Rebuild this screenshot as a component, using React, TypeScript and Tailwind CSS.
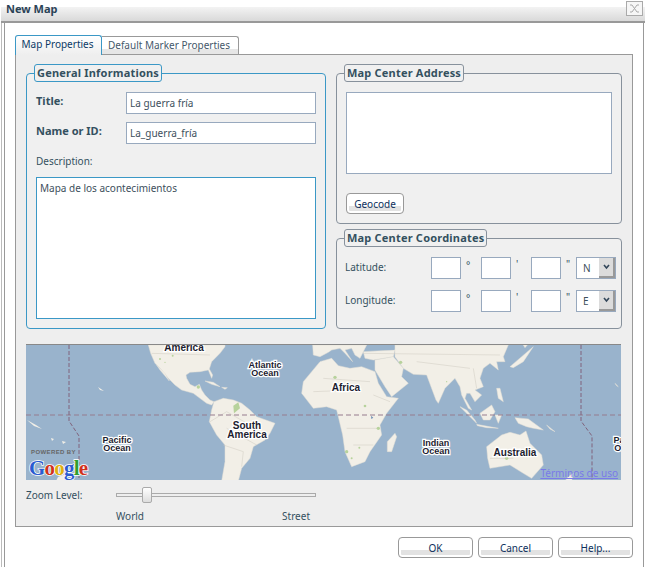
const font = "[font-family:'Noto_Sans',sans-serif]";

function Legend({ title, active }: { title: string; active?: boolean }) {
  return (
    <legend
      className={`-ml-[2px] h-[18px] rounded-[3px] border bg-[#f0f0f0] px-[2px] text-[11px] leading-[15px] font-bold tracking-[0.2px] text-[#34505f] ${
        active ? "border-[#3b98c6]" : "border-[#87919c]"
      }`}
    >
      {title}
    </legend>
  );
}

function Field({ value, className }: { value?: string; className: string }) {
  return (
    <input
      readOnly
      value={value ?? ""}
      className={`h-[22px] border border-[#98a9be] bg-white px-[3px] text-[10px] text-[#3d4f5c] outline-none ${className}`}
    />
  );
}

function Coordinates({ label, dir }: { label: string; dir: string }) {
  return (
    <div className="flex h-[22px] items-center">
      <span className="-ml-px w-[86px] pb-[2px] text-[10px] text-[#34505f]">{label}</span>
      <Field className="w-[30px]" />
      <span className="w-[20px] self-start pl-[5px] text-[10px] leading-[16px] text-[#34505f]">°</span>
      <Field className="w-[30px]" />
      <span className="w-[20px] self-start pl-[5px] text-[10px] leading-[14px] text-[#34505f]">'</span>
      <Field className="w-[30px]" />
      <span className="w-[15px] self-start pl-[5px] text-[10px] leading-[14px] text-[#34505f]">"</span>
      <div className="flex h-[22px] w-[40px] items-center border border-[#98a9be] bg-white pl-[6px] text-[10px] text-[#3d4f5c]">
        <span className="flex-1">{dir}</span>
        <span className="flex h-[20px] w-[16px] items-center justify-center border-r-2 border-b-2 border-[#999] bg-[#dcdcdc]">
          <svg width="7" height="6" viewBox="0 0 7 6">
            <path d="M1 1l2.5 3L6 1" fill="none" stroke="#33475a" strokeWidth="1.6" />
          </svg>
        </span>
      </div>
    </div>
  );
}

function Btn({ label, className }: { label: string; className: string }) {
  return (
    <button
      className={`rounded-[4px] border border-[#999] bg-[linear-gradient(#fff_62%,#e2e2e2_64%)] text-[10px] leading-none text-[#0c2f5c] shadow-[inset_0_0_0_2px_#fff] ${className}`}
    >
      {label}
    </button>
  );
}

function WorldMap() {
  const label = "font-bold fill-[#1c1c30] stroke-white [stroke-width:2.5px] [paint-order:stroke] [font-family:'Liberation_Sans',sans-serif]";
  return (
    <svg width="595" height="136" viewBox="0 0 595 136" className="block">
      <rect width="595" height="136" fill="#99b3cc" />
      {/* americas, drawn at 3x */}
      <g transform="translate(84 0) scale(0.3333)">
        <g fill="#f2efe7" stroke="#e2dfd4" strokeWidth="1.5">
          <path d="M115 0L122 25L135 55L150 70L175 100L195 120L215 135L250 145L270 160L290 175L305 180L312 170L300 165L285 150L275 135L268 118L255 125L240 118L230 100L228 90L240 82L270 80L295 75L305 100L308 90L298 72L305 50L330 25L345 5L345 0Z" />
          <path d="M285 108L310 112L330 125L305 118Z" />
          <path d="M335 127L352 128L345 133Z" />
          <path d="M140 60L150 75L178 108L165 85Z" />
          <path d="M312 170L340 160L370 165L395 175L420 195L440 215L495 235L480 265L465 285L430 305L420 340L395 370L385 408L335 408L345 350L345 300L320 270L298 230L305 195Z" />
        </g>
        <path d="M125 25L300 30M300 230L350 200L420 240M340 300L400 320M400 320L395 365M350 250L440 300" fill="none" stroke="#cfcbc0" strokeWidth="1.5" />
        <g fill="#b7d29c">
          <path d="M370 182L385 172L390 190L372 205Z" />
          <circle cx="265" cy="126" r="5" /><circle cx="188" cy="32" r="3" /><circle cx="150" cy="42" r="3" /><circle cx="165" cy="52" r="2" />
        </g>
      </g>

      {/* africa, eurasia, pacific, drawn at 3x */}
      <g transform="translate(244 0) scale(0.3333)">
        <g fill="#f2efe7" stroke="#e2dfd4" strokeWidth="1.5">
          <path d="M125 80L150 50L185 40L205 62L240 70L275 65L315 80L325 115L350 155L385 160L350 205L330 240L335 270L300 320L285 350L245 365L225 320L218 270L205 215L200 195L170 185L130 190L95 145L100 110Z" />
          <path d="M375 265L380 275L365 320L352 320L352 290Z" />
          <path d="M128 0L290 0L280 20L270 40L255 30L245 10L225 15L248 50L225 25L210 10L185 15L175 22L150 35L130 30Z" />
          <path d="M280 20L375 15L370 35L310 45L285 40Z" />
          <path d="M375 0L715 0L700 35L705 50L680 50L685 75L660 55L640 70L630 100L640 125L615 135L635 150L615 170L600 145L590 145L585 160L605 195L595 190L575 150L570 125L555 100L525 130L505 175L498 165L470 90L430 88L400 70L375 35Z" />
          <path d="M315 45L370 35L400 70L395 95L415 115L365 155L345 125L315 75Z" />
          <path d="M300 0L370 0L372 14L300 14Z" fill="#99b3cc" stroke="none" />
          <path d="M790 5L755 35L720 65L730 68L760 50L780 20Z" />
          <path d="M760 0L772 0L765 8Z" />
          <path d="M570 185L590 205L620 235L615 225L590 195Z" />
          <path d="M620 238L685 250L650 248L622 242Z" />
          <path d="M630 205L665 180L675 200L660 225L640 225Z" />
          <path d="M675 210L695 210L685 235Z" />
          <path d="M680 130L690 130L700 170L685 160Z" />
          <path d="M735 218L775 222L820 255L790 250L770 245L745 235Z" />
          <path d="M830 240L855 260L840 252Z" />
          <path d="M650 305L695 270L720 262L750 270L768 258L780 295L815 330L820 360L785 400L760 385L720 360L660 370L653 340Z" />
          <path d="M895 395L910 385L905 408L885 408Z" />
          <path d="M1035 115L1045 125L1040 122Z" />
        </g>
        <path d="M130 140L260 135M160 100L300 110M310 150L360 170M230 250L330 250M250 300L310 300M280 25L690 30M440 50L600 70M610 70L620 130M660 340L730 340" fill="none" stroke="#cfcbc0" strokeWidth="1.5" />
        <g fill="#b7d29c">
          <circle cx="195" cy="97" r="5" /><circle cx="285" cy="183" r="4" /><circle cx="325" cy="250" r="5" />
          <circle cx="230" cy="320" r="5" /><circle cx="268" cy="308" r="3" /><circle cx="245" cy="340" r="3" />
          <circle cx="392" cy="52" r="5" /><circle cx="710" cy="340" r="5" /><circle cx="530" cy="110" r="2" />
        </g>
        <path d="M303 212L310 218L304 222Z" fill="#6f8fb5" />
      </g>

      {/* pacific islands */}
      <g fill="#f2efe7">
        <path d="M1 75L10 80L16 84L8 81Z" /><path d="M25 93L28 94L26 96Z" /><path d="M36 96L40 97L37 99Z" />
        <path d="M72 42L78 46L74 45Z" /><path d="M32 132L42 128L38 136L30 136Z" />
      </g>

      {/* equator and date line */}
      <path d="M0 70H595" stroke="#967c8e" strokeWidth="1.2" strokeDasharray="5 3" fill="none" />
      <path d="M43 0V76L53 91V136M555 0V76L566 91V136" stroke="#80637c" strokeWidth="1" strokeDasharray="4 2" fill="none" />
      <g fontSize="9" textAnchor="middle" className={label}>
        <text x="158" y="6" fontSize="10">America</text>
        <text x="239" y="23">Atlantic</text>
        <text x="239" y="31">Ocean</text>
        <text x="320" y="46" fontSize="10">Africa</text>
        <text x="221" y="84" fontSize="10">South</text>
        <text x="221" y="93" fontSize="10">America</text>
        <text x="91" y="98">Pacific</text>
        <text x="91" y="106">Ocean</text>
        <text x="410" y="101">Indian</text>
        <text x="410" y="109">Ocean</text>
        <text x="489" y="111" fontSize="10">Australia</text>
        <text x="602" y="98">Pacific</text>
        <text x="602" y="106">Ocean</text>
      </g>
      <text x="5" y="109" fontSize="6" fontWeight="bold" fill="#666" className="[font-family:'Liberation_Sans',sans-serif] tracking-[0.4px]">POWERED BY</text>
      <text x="3" y="130" fontSize="21" fontWeight="bold" stroke="#fff" strokeWidth="1.5" className="[font-family:'Liberation_Serif',serif] [paint-order:stroke] tracking-[-0.8px]">
        <tspan fill="#2a5bd0">G</tspan>
        <tspan fill="#d0321e">o</tspan>
        <tspan fill="#e0b010">o</tspan>
        <tspan fill="#2a5bd0">g</tspan>
        <tspan fill="#2f9e2f">l</tspan>
        <tspan fill="#d0321e">e</tspan>
      </text>
    </svg>
  );
}

export default function App() {
  return (
    <div className={`relative h-[567px] w-[645px] overflow-hidden bg-white pt-[7px] ${font}`}>
      {/* title bar */}
      <div className="ml-[1px] h-[16px] w-[644px] border-b-2 border-[#999] bg-[linear-gradient(#f3f3f3,#d9d9d9)] pl-[5px] text-[11px] leading-[4px] font-bold text-[#2b4357]">
        New Map
      </div>
      <div className="absolute top-[1px] left-[626px] flex h-[15px] w-[17px] items-center justify-center border border-[#aaa] bg-[#f6f6f6]">
        <svg width="11" height="9" viewBox="0 0 11 9">
          <path d="M1 1h2l5 7h2M10 1H8L3 8H1" fill="none" stroke="#a9a9a9" />
        </svg>
      </div>

      <div className="ml-[1px] h-[544px] w-[643px] border-x border-l-[#bbb] border-r-[#999] pt-[13px] pr-[10px] pl-[13px] shadow-[inset_2px_0_0_#fff,inset_3px_0_0_#999]">
        {/* tabs */}
        <div className="relative z-10 flex h-[18px] items-end text-[10px]">
          <div className="-mb-px h-[20px] w-[87px] rounded-t-[3px] border border-b-0 border-[#3b98c6] bg-[linear-gradient(#fff,#eee)] pr-[2px] text-center leading-[17px] text-[#0c3a66]">
            Map Properties
          </div>
          <div className="h-[18px] w-[137px] rounded-tr-[3px] border border-b-0 border-l-0 border-[#999] bg-[linear-gradient(#fff_70%,#e6e6e6_72%)] pr-[2px] text-center leading-[17px] text-[#44586a]">
            Default Marker Properties
          </div>
        </div>

        {/* panel */}
        <div className="h-[473px] w-[618px] border border-[#999] bg-[#eee] px-[10px] pt-[9px]">
          <div className="flex gap-[10px]">
            <fieldset className="h-[265px] w-[300px] rounded-[4px] border border-[#3b98c6] bg-[#f0f0f0] px-[9px] pt-[10px]">
              <Legend title="General Informations" active />
              <div className="flex h-[22px] items-start">
                <span className="w-[90px] pt-px text-[11px] font-bold text-[#34505f]">Title:</span>
                <Field value="La guerra fría" className="w-[190px]" />
              </div>
              <div className="mt-[8px] flex h-[22px] items-start">
                <span className="w-[90px] pt-px text-[11px] font-bold text-[#34505f]">Name or ID:</span>
                <Field value="La_guerra_fría" className="w-[190px]" />
              </div>
              <div className="mt-[10px] h-[23px] text-[10px] text-[#34505f]">Description:</div>
              <textarea
                readOnly
                value="Mapa de los acontecimientos"
                className="block h-[142px] w-[280px] resize-none border border-[#3b98c6] bg-white p-[3px] text-[10px] text-[#3d4f5c] outline-none"
              />
            </fieldset>

            <div className="flex w-[286px] flex-col gap-[5px]">
              <fieldset className="h-[160px] rounded-[4px] border border-[#87919c] bg-[#f0f0f0] px-[9px] pt-[10px]">
                <Legend title="Map Center Address" />
                <div className="h-[82px] w-[266px] border border-[#98a9be] bg-white" />
                <Btn label="Geocode" className="mt-[19px] block h-[21px] w-[58px]" />
              </fieldset>
              <fieldset className="h-[100px] rounded-[4px] border border-[#87919c] bg-[#f0f0f0] pt-[10px] pl-[9px]">
                <Legend title="Map Center Coordinates" />
                <div className="flex flex-col gap-[11px]">
                  <Coordinates label="Latitude:" dir="N" />
                  <Coordinates label="Longitude:" dir="E" />
                </div>
              </fieldset>
            </div>
          </div>

          {/* map */}
          <div className="relative mt-[15px] h-[136px] w-[595px] overflow-hidden border-t border-[#888]">
            <WorldMap />
            <a className="absolute right-[3px] bottom-[2px] text-[10px] leading-none text-[#7a7ae8] underline">Términos de uso</a>
          </div>

          {/* zoom slider */}
          <div className="mt-[7px] flex h-[16px] items-center text-[10px] text-[#34505f]">
            <span className="w-[90px]">Zoom Level:</span>
            <div className="relative h-[4px] w-[200px] border border-[#aaa] bg-[#eee]">
              <div className="absolute top-[-7px] left-[25px] h-[16px] w-[10px] rounded-[2px] border border-[#aaa] bg-[linear-gradient(#fff,#ddd)]" />
            </div>
          </div>
          <div className="mt-[5px] ml-[90px] flex w-[194px] justify-between text-[10px] leading-[16px] text-[#34505f]">
            <span>World</span>
            <span>Street</span>
          </div>
        </div>

        {/* footer */}
        <div className="mt-[10px] flex justify-end gap-[5px]">
          <Btn label="OK" className="h-[21px] w-[75px]" />
          <Btn label="Cancel" className="h-[21px] w-[75px]" />
          <Btn label="Help..." className="h-[21px] w-[75px]" />
        </div>
      </div>
    </div>
  );
}
